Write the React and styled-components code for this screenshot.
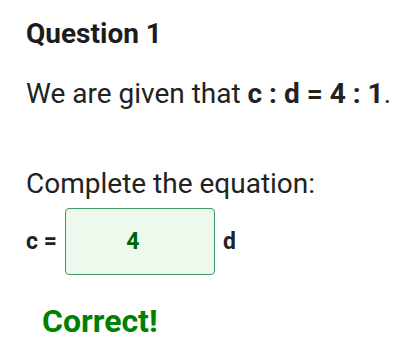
import React from "react";
import styled, { createGlobalStyle } from "styled-components";

const Global = createGlobalStyle`
  html, body { margin: 0; padding: 0; background: #ffffff; }
  body { font-family: Roboto, "Liberation Sans", Arial, sans-serif; color: #212121; }
`;

const Page = styled.div`
  display: flex;
  flex-direction: column;
  align-items: flex-start;
  padding: 18px 10px 0 26px;
`;

const Heading = styled.h2`
  margin: 0;
  font-size: 28px;
  font-weight: 700;
  line-height: 32px;
  color: #1c1c1c;
`;

const Text = styled.p`
  margin: ${(p) => p.$top}px 0 0 0;
  font-size: 28px;
  font-weight: 400;
  line-height: 32px;
  color: #222222;
  white-space: nowrap;
`;

const Row = styled.div`
  display: flex;
  align-items: center;
  gap: 8px;
  margin-top: 8px;
`;

const Label = styled.span`
  font-size: 23px;
  font-weight: 700;
  line-height: 28px;
  color: #222222;
`;

const AnswerInput = styled.input`
  box-sizing: border-box;
  width: 150px;
  height: 67px;
  margin: 0;
  padding: 0 14px 0 0;
  border: 1px solid #3f9a62;
  border-radius: 4px;
  background: #edf9ec;
  color: #006400;
  font-family: Roboto, "Liberation Sans", Arial, sans-serif;
  font-size: 23px;
  font-weight: 700;
  text-align: center;
  outline: none;
`;

const Feedback = styled.div`
  margin: 28px 0 0 16px;
  font-size: 32px;
  font-weight: 700;
  line-height: 37px;
  color: #008000;
`;

export default function App() {
  return (
    <>
      <Global />
      <Page>
        <Heading>Question 1</Heading>
        <Text $top={28}>
          We are given that <b>c : d = 4 : 1</b>.
        </Text>
        <Text $top={58}>Complete the equation:</Text>
        <Row>
          <Label>c =</Label>
          <AnswerInput readOnly value="4" />
          <Label>d</Label>
        </Row>
        <Feedback>Correct!</Feedback>
      </Page>
    </>
  );
}
